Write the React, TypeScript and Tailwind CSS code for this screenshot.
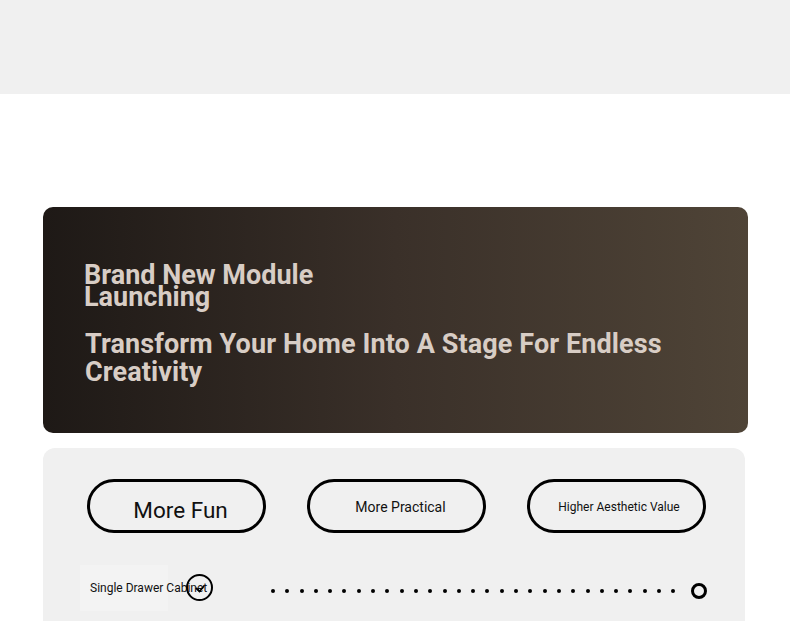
import React from "react";

export default function App() {
  const dots = Array.from({ length: 29 });
  return (
    <div className="w-[790px] h-[621px] overflow-hidden bg-white" style={{ fontFamily: "Roboto, 'Liberation Sans', sans-serif" }}>
      <div className="h-[94px] bg-[#f0f0f0]" />
      <div className="h-[113px]" />
      <div className="mx-[43px] w-[705px] h-[226px] rounded-[10px] bg-gradient-to-r from-[#1e1916] via-[#3a3029] to-[#4f4437] pl-[41px] pt-[57px]">
        <h1 className="w-[270px] text-[27px] font-bold leading-[22px] text-[#d8cdc5]">
          Brand New Module Launching
        </h1>
        <h2 className="mt-[22px] w-[600px] text-[27px] font-bold leading-[28px] tracking-[0.1px] text-[#d8cdc5] pl-[1px]">
          Transform Your Home Into A Stage For Endless Creativity
        </h2>
      </div>
      <div className="mt-[15px] ml-[43px] w-[702px] h-[200px] rounded-[12px] bg-[#f0f0f0] pt-[31px]">
        <div className="flex gap-[41px] pl-[44px]">
          <button className="w-[179px] h-[54px] rounded-full border-[3px] border-black flex items-center justify-center text-[22.5px] text-[#111] pt-[9px] pl-[8px]">
            More Fun
          </button>
          <button className="w-[179px] h-[54px] rounded-full border-[3px] border-black flex items-center justify-center text-[14px] text-[#111] pt-[2px] pl-[8px]">
            More Practical
          </button>
          <button className="w-[179px] h-[54px] rounded-full border-[3px] border-black flex items-center justify-center text-[12px] text-[#111] pt-[2px] pl-[5px]">
            Higher Aesthetic Value
          </button>
        </div>
        <div className="mt-[32px] flex items-center h-[46px]">
          <div className="relative ml-[37px] h-[46px] w-[88px] bg-[#f3f3f3] flex items-center">
            <span className="ml-[10px] whitespace-nowrap text-[12px] text-[#111]">Single Drawer Cabinet</span>
            <span className="absolute left-[106px] top-[9px] w-[27px] h-[27px] rounded-full border-2 border-black flex items-center justify-center">
              <svg width="12" height="10" viewBox="0 0 12 10" className="mt-[3px]">
                <path d="M2 4 L5.5 7.5 L10 2" fill="none" stroke="black" strokeWidth="1.8" />
              </svg>
            </span>
          </div>
          <div className="ml-[103px] flex items-center gap-[10.3px] mt-[6px]">
            {dots.map((_, i) => (
              <span key={i} className="block w-[4px] h-[4px] rounded-full bg-black" />
            ))}
            <span className="ml-[5px] block w-[16px] h-[16px] rounded-full border-[3px] border-black" />
          </div>
        </div>
      </div>
    </div>
  );
}
